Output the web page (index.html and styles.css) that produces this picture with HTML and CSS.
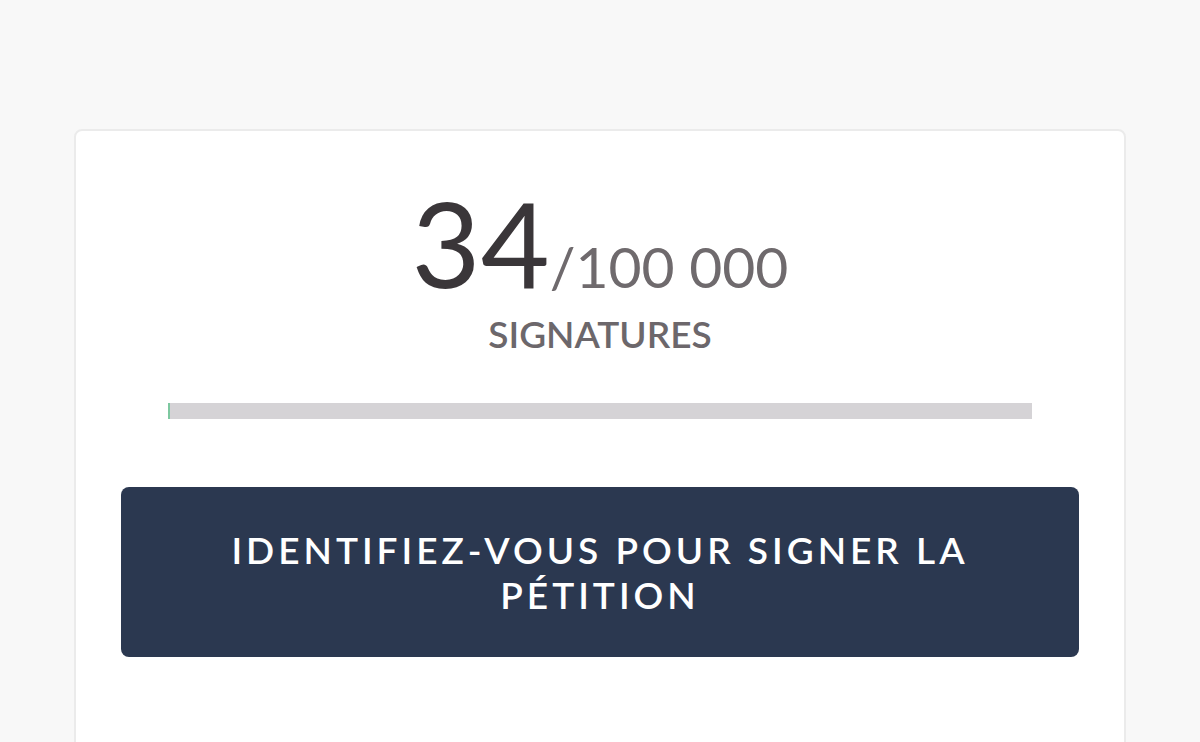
FILE: index.html
```html
<!DOCTYPE html>
<html lang="fr">
<head>
<meta charset="utf-8">
<link rel="stylesheet" href="styles.css">
</head>
<body>
<main class="page">
  <section class="card">
    <div class="count">
      <span class="count-now">34</span><span class="count-goal">/100 000</span>
    </div>
    <div class="count-label">SIGNATURES</div>
    <div class="progress"><div class="progress-fill" style="width:0.034%"></div></div>
    <button class="sign-btn">IDENTIFIEZ-VOUS POUR SIGNER LA PÉTITION</button>
  </section>
</main>
</body>
</html>
```
FILE: styles.css
```css
html, body {
  margin: 0;
  padding: 0;
  background: #f8f8f8;
  height: 100%;
  overflow: hidden;
}
body {
  font-family: "Lato", "Open Sans", sans-serif;
}
.page {
  padding: 129px 74px 0 74px;
}
.card {
  background: #fff;
  border: 2px solid #ebebeb;
  border-radius: 8px;
  padding: 52px 45px 120px;
  display: flex;
  flex-direction: column;
  align-items: center;
  min-height: 700px;
  box-sizing: border-box;
}
.count {
  display: flex;
  align-items: baseline;
  line-height: 1;
}
.count-now {
  font-size: 119px;
  color: #3a3639;
  font-weight: 400;
}
.count-goal {
  font-size: 57px;
  color: #6f6a6d;
  font-weight: 400;
}
.count-label {
  font-size: 37px;
  font-weight: 600;
  color: #6c676b;
  margin-top: 9px;
}
.progress {
  align-self: stretch;
  margin: 47px 47px 0;
  height: 16px;
  background: #d5d3d6;
}
.progress-fill {
  height: 100%;
  min-width: 2px;
  background: #7dc8a0;
}
.sign-btn {
  align-self: stretch;
  margin-top: 68px;
  height: 170px;
  border: none;
  border-radius: 8px;
  background: #2b3850;
  color: #fff;
  font-family: inherit;
  font-size: 37px;
  font-weight: 600;
  letter-spacing: 4px;
  line-height: 45px;
  padding: 0 90px;
}
```
